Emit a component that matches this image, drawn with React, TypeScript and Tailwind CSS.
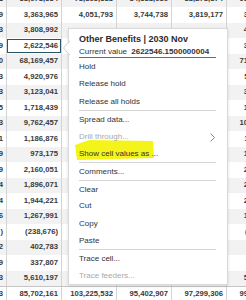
import React from "react";

const col0 = ["1","9","3","9","0","3","3","5","3","1","9","9","4","4","6",")","2","9","3","3"];
const col1 = ["38,678,534","3,363,965","3,808,992","2,622,546","68,169,457","4,920,976","3,123,041","1,718,439","9,762,457","1,186,876","973,175","2,160,051","1,896,071","1,944,221","1,267,991","(238,676)","402,783","337,807","5,610,197","85,702,161"];
const col2 = ["78,865,388","4,051,793","","","","","","","","","","","","","","","","","","103,225,532"];
const col3 = ["84,381,636","3,744,738","","","","","","","","","","","","","","","","","","95,402,907"];
const col4 = ["88,278,874","3,819,177","","","","","","","","","","","","","","","","","","97,299,306"];
const col5 = ["93,614,020","3,927,554","4,012,876","3,106,442","71,208,335","5,113,090","3,440,318","1,802,771","10,245,663","1,240,118","1,015,402","2,301,877","2,004,561","2,066,190","1,332,905","(251,044)","421,338","356,210","5,902,447","99,812,604"];

const cols = [col0, col1, col2, col3, col4, col5];

function Item({ children, disabled, sep }: { children: React.ReactNode; disabled?: boolean; sep?: boolean }) {
  return (
    <div
      className={
        "h-[17.4px] leading-[17.4px] relative " +
        (sep ? "border-t border-[#d6d6d6] " : "") +
        (disabled ? "text-[#a9a9a9]" : "text-[#333333]")
      }
    >
      {children}
    </div>
  );
}

export default function App() {
  return (
    <div
      className="w-[246px] h-[300px] overflow-hidden relative bg-white"
      style={{ fontFamily: '"Liberation Sans", Arial, sans-serif' }}
    >
      <div className="ml-[-48px] mt-[-8.5px] flex flex-col">
        {col1.map((_, r) => (
          <div
            key={r}
            className={
              "flex h-[15.5px] shrink-0 " +
              (r === 19 ? "bg-white border-t border-[#c4c4c4] " : r % 2 === 0 ? "bg-[#f2f2f2] " : "bg-white ")
            }
          >
            {cols.map((c, ci) => (
              <div
                key={ci}
                className="w-[55px] shrink-0 border-r border-[#d4d4d4] flex items-center justify-end pr-[3px] text-[7.7px] font-bold text-[#3a3a3a] whitespace-nowrap relative"
              >
                {r === 3 && ci === 1 ? (
                  <div className="absolute inset-x-0 top-[0.5px] bottom-[0.5px] border-[1.5px] border-[#27566a]" />
                ) : null}
                <span className="relative">{c[r]}</span>
              </div>
            ))}
          </div>
        ))}
      </div>

      {/* popup */}
      <div className="absolute left-[68px] top-[28px] w-[160px] bg-white border border-[#d9d9d9] shadow-[0_1px_3px_rgba(0,0,0,0.12)] pt-[4px] pl-[10px] pr-[11px] text-[8px]">
        <svg className="absolute left-[-6px] top-[12px]" width="7" height="14" viewBox="0 0 7 14">
          <path d="M7 0 L0.5 7 L7 14" fill="white" stroke="#d0d0d0" strokeWidth="1" />
        </svg>
        <svg className="absolute left-[5px] top-[110px]" width="82" height="22" viewBox="0 0 82 22">
          <polygon points="1,6 15,1 79,2 80,19 3,21" fill="#f4f41a" />
        </svg>
        <div className="h-[12px] leading-[12px] text-[9px] font-bold text-[#2b2b2b] whitespace-nowrap">
          Other Benefits | 2030 Nov
        </div>
        <div className="h-[13px] leading-[13px] border-b border-[#6a6a6a] whitespace-nowrap text-[#333333]">
          Current value <span className="font-bold ml-[2px]">2622546.1500000004</span>
        </div>
        <div className="relative">
          <Item>Hold</Item>
          <Item>Release hold</Item>
          <Item>Release all holds</Item>
          <Item sep>Spread data...</Item>
          <Item disabled>
            Drill through...
            <svg className="absolute right-[1px] top-[5px]" width="5" height="9" viewBox="0 0 5 9">
              <path d="M0.5 0.5 L4.5 4.5 L0.5 8.5" fill="none" stroke="#8a8a8a" strokeWidth="1" />
            </svg>
          </Item>
          <Item>Show cell values as ...</Item>
          <Item sep>Comments...</Item>
          <Item sep>Clear</Item>
          <Item>Cut</Item>
          <Item>Copy</Item>
          <Item>Paste</Item>
          <Item sep>Trace cell...</Item>
          <Item disabled>Trace feeders...</Item>
        </div>
      </div>
    </div>
  );
}
